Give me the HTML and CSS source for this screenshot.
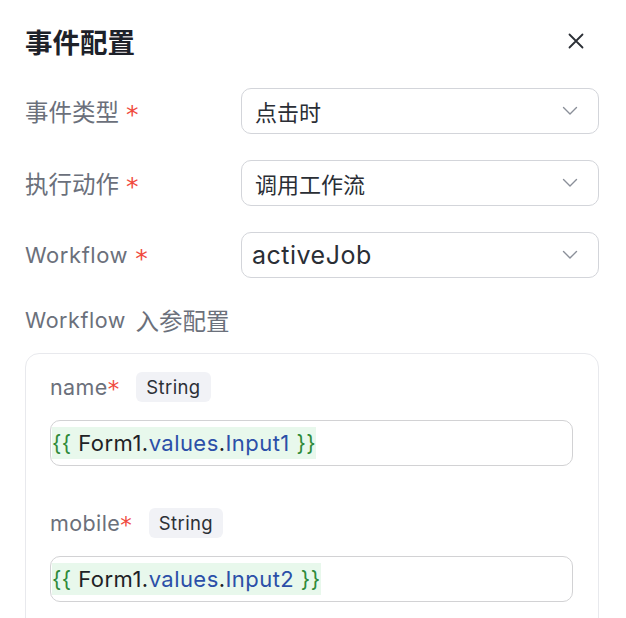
FILE: index.html
```html
<!DOCTYPE html>
<html lang="zh-CN">
<head>
<meta charset="utf-8">
<title>事件配置</title>
<link rel="stylesheet" href="styles.css">
</head>
<body>
<div class="panel">
  <div class="header">
    <h1 class="title">事件配置</h1>
    <button class="close" aria-label="关闭">
      <svg width="18" height="18" viewBox="0 0 18 18"><path d="M2.5 2.5 L15.5 15.5 M15.5 2.5 L2.5 15.5" stroke="#2b2f36" stroke-width="1.8" stroke-linecap="round" fill="none"/></svg>
    </button>
  </div>

  <div class="row">
    <div class="label">事件类型<span class="req">*</span></div>
    <div class="select"><span class="value">点击时</span>
      <svg class="chev" width="16" height="10" viewBox="0 0 16 10"><path d="M1.5 1.5 L8 8 L14.5 1.5" stroke="#8a8f99" stroke-width="1.4" fill="none" stroke-linecap="round" stroke-linejoin="round"/></svg>
    </div>
  </div>
  <div class="row">
    <div class="label">执行动作<span class="req">*</span></div>
    <div class="select"><span class="value">调用工作流</span>
      <svg class="chev" width="16" height="10" viewBox="0 0 16 10"><path d="M1.5 1.5 L8 8 L14.5 1.5" stroke="#8a8f99" stroke-width="1.4" fill="none" stroke-linecap="round" stroke-linejoin="round"/></svg>
    </div>
  </div>
  <div class="row">
    <div class="label latin">Workflow<span class="req">*</span></div>
    <div class="select"><span class="value big">activeJob</span>
      <svg class="chev" width="16" height="10" viewBox="0 0 16 10"><path d="M1.5 1.5 L8 8 L14.5 1.5" stroke="#8a8f99" stroke-width="1.4" fill="none" stroke-linecap="round" stroke-linejoin="round"/></svg>
    </div>
  </div>

  <div class="section-title">Workflow <span class="cjk">入参配置</span></div>

  <div class="card">
    <div class="param">
      <div class="param-head"><span class="pname">name</span><span class="req tight">*</span><span class="tag">String</span></div>
      <div class="code-input"><span class="code"><span class="br">{{</span> Form1.<span class="kw">values</span>.<span class="kw">Input1</span> <span class="br">}}</span></span></div>
    </div>
    <div class="param">
      <div class="param-head"><span class="pname">mobile</span><span class="req tight">*</span><span class="tag">String</span></div>
      <div class="code-input"><span class="code"><span class="br">{{</span> Form1.<span class="kw">values</span>.<span class="kw">Input2</span> <span class="br">}}</span></span></div>
    </div>
  </div>
</div>
</body>
</html>
```

FILE: styles.css
```css
* { box-sizing: border-box; }
html, body {
  margin: 0;
  padding: 0;
  background: #ffffff;
}
body {
  font-family: "Inter", "Noto Sans CJK SC", sans-serif;
  color: #1f2329;
}
.panel {
  padding: 22px 27px 0 25px;
  width: 626px;
  height: 618px;
  overflow: hidden;
}
.header {
  display: flex;
  align-items: center;
  justify-content: space-between;
  height: 38px;
}
.title {
  margin: 0;
  font-family: "Noto Sans CJK SC", sans-serif;
  font-size: 27.5px;
  font-weight: 700;
  color: #1d2129;
  line-height: 38px;
}
.close {
  border: 0;
  background: transparent;
  padding: 0;
  margin-right: 14px;
  width: 18px;
  height: 18px;
  display: flex;
  align-items: center;
  justify-content: center;
}
.row {
  display: flex;
  align-items: center;
  margin-top: 28px;
}
.row + .row { margin-top: 26px; }
.label {
  width: 216px;
  flex: none;
  font-family: "Noto Sans CJK SC", sans-serif;
  font-size: 23.5px;
  color: #6b707b;
  display: flex;
  align-items: center;
}
.label.latin {
  font-family: "Inter", "Noto Sans CJK SC", sans-serif;
  font-size: 22px;
  letter-spacing: 0.55px;
}
.req {
  color: #f04a3e;
  font-family: "DejaVu Sans", sans-serif;
  font-size: 25px;
  letter-spacing: 0;
  margin-left: 7px;
  line-height: 1;
  position: relative;
  top: 3px;
}
.req.tight { margin-left: 0; font-size: 23px; top: 2px; }
.select {
  flex: 1;
  height: 46px;
  border: 1.5px solid #d3d5da;
  border-radius: 10px;
  display: flex;
  align-items: center;
  justify-content: space-between;
  padding: 0 20px 0 13px;
}
.value {
  font-family: "Noto Sans CJK SC", sans-serif;
  font-size: 22px;
  color: #2a2e35;
}
.value.big {
  font-family: "Inter", sans-serif;
  font-size: 25px;
  letter-spacing: 0.5px;
  margin-left: -3px;
}
.chev { flex: none; }
.section-title {
  margin-top: 27px;
  height: 30px;
  font-size: 21.5px;
  letter-spacing: 0.55px;
  color: #6b707b;
  line-height: 30px;
  display: flex;
  align-items: center;
  white-space: pre;
}
.section-title .cjk {
  font-family: "Noto Sans CJK SC", sans-serif;
  font-size: 23.5px;
  line-height: 30px;
  letter-spacing: 0;
  margin-left: 3px;
}
.section-title, .pname, .tag, .code { font-family: "Inter", "Noto Sans CJK SC", sans-serif; }
.card {
  margin-top: 18px;
  border: 1.5px solid #e8e9ed;
  border-radius: 14px;
  padding: 18px 25px 30px 24px;
  height: 300px;
}
.param + .param { margin-top: 42px; }
.param-head {
  display: flex;
  align-items: center;
  height: 30px;
}
.pname {
  font-size: 21.5px;
  letter-spacing: 0.4px;
  color: #6b707b;
}
.tag {
  margin-left: 17px;
  background: #f1f2f6;
  border-radius: 6px;
  padding: 0 10px;
  height: 30px;
  line-height: 30px;
  font-size: 18.5px;
  letter-spacing: 0.4px;
  color: #2c3036;
}
.code-input {
  margin-top: 18px;
  height: 46px;
  border: 1.5px solid #d2d2d4;
  border-radius: 10px;
  display: flex;
  align-items: center;
  padding-left: 1px;
}
.code {
  background: #e8f8ec;
  font-size: 22px;
  letter-spacing: 0.45px;
  line-height: 32px;
  color: #1e2226;
  white-space: pre;
}
.br { color: #2f8a3a; }
.kw { color: #2b4fa8; }
```
